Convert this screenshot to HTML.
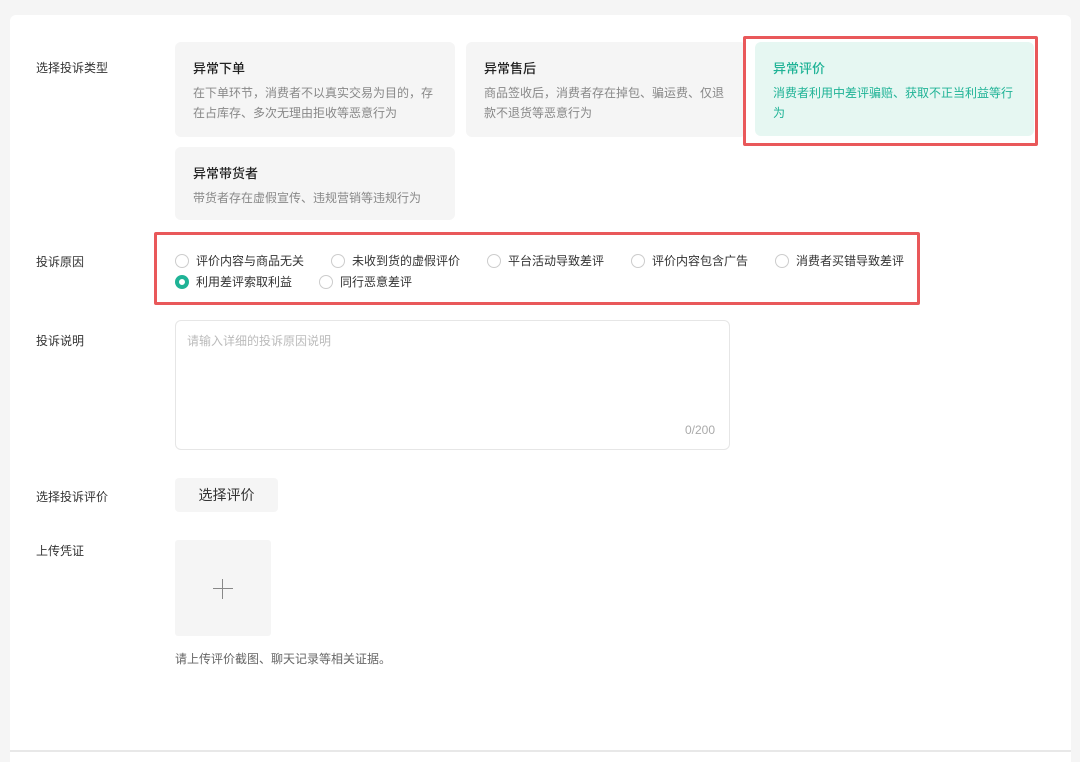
<!DOCTYPE html>
<html><head><meta charset="utf-8"><style>
*{margin:0;padding:0;box-sizing:border-box}
body{width:1080px;height:759px;background:#f5f5f5;font-family:"Liberation Sans","Noto Sans CJK SC",sans-serif;position:relative;overflow:hidden;color:#333}
.card{position:absolute;left:10px;top:15px;width:1061px;height:737px;background:#fff;border-radius:6px 6px 0 0;border-bottom:2px solid #e8e8e8}
.below{position:absolute;left:10px;top:752px;width:1061px;height:10px;background:#fff}
.a{position:absolute;white-space:nowrap}
.lbl{font-size:12px;color:#333}
.t{position:absolute;background:#f5f5f5;border-radius:6px;padding:18px 18px 0 18px}
.t b{display:block;font-size:13px;font-weight:500;color:#222;line-height:18px;margin-bottom:5px}
.t p{font-size:12px;color:#888;line-height:20px}
.red{position:absolute;border:3px solid #e9585a;border-radius:2px}
.r{position:absolute;font-size:12px;color:#333;line-height:16px;white-space:nowrap;padding-left:21px}
.r:before{content:"";position:absolute;left:0;top:1px;width:14px;height:14px;border:1px solid #ccc;border-radius:50%;box-sizing:border-box}
.r.on:before{border:4px solid #1fb396}
</style></head><body>
<div class="card"></div><div class="below"></div>
<div class="a lbl" style="left:36px;top:59px">选择投诉类型</div>
<div class="t" style="left:175px;top:42px;width:280px;height:95px"><b>异常下单</b><p>在下单环节，消费者不以真实交易为目的，存<br>在占库存、多次无理由拒收等恶意行为</p></div>
<div class="t" style="left:466px;top:42px;width:280px;height:95px"><b>异常售后</b><p>商品签收后，消费者存在掉包、骗运费、仅退<br>款不退货等恶意行为</p></div>
<div class="t" style="left:755px;top:42px;width:279px;height:94px;background:#e6f7f2"><b style="color:#1fb396;font-weight:500">异常评价</b><p style="color:#1fb396">消费者利用中差评骗赔、获取不正当利益等行<br>为</p></div>
<div class="red" style="left:743px;top:36px;width:295px;height:110px"></div>
<div class="t" style="left:175px;top:147px;width:280px;height:73px"><b>异常带货者</b><p>带货者存在虚假宣传、违规营销等违规行为</p></div>

<div class="a lbl" style="left:36px;top:253px">投诉原因</div>
<div class="red" style="left:154px;top:232px;width:766px;height:73px"></div>
<div class="r" style="left:175px;top:253px">评价内容与商品无关</div>
<div class="r" style="left:331px;top:253px">未收到货的虚假评价</div>
<div class="r" style="left:487px;top:253px">平台活动导致差评</div>
<div class="r" style="left:631px;top:253px">评价内容包含广告</div>
<div class="r" style="left:775px;top:253px">消费者买错导致差评</div>
<div class="r on" style="left:175px;top:274px">利用差评索取利益</div>
<div class="r" style="left:319px;top:274px">同行恶意差评</div>

<div class="a lbl" style="left:36px;top:332px">投诉说明</div>
<div class="a" style="left:175px;top:320px;width:555px;height:130px;border:1px solid #e6e6e6;border-radius:6px"></div>
<div class="a" style="left:187px;top:332px;font-size:12px;color:#bbb">请输入详细的投诉原因说明</div>
<div class="a" style="left:685px;top:423px;font-size:12px;color:#aaa">0/200</div>

<div class="a lbl" style="left:36px;top:488px">选择投诉评价</div>
<div class="a" style="left:175px;top:478px;width:103px;height:34px;background:#f5f5f5;border-radius:4px;font-size:14px;line-height:34px;text-align:center;color:#333">选择评价</div>

<div class="a lbl" style="left:36px;top:542px">上传凭证</div>
<div class="a" style="left:175px;top:540px;width:96px;height:96px;background:#f5f5f5;border-radius:3px"></div>
<div class="a" style="left:213px;top:588px;width:20px;height:1px;background:#888"></div>
<div class="a" style="left:222px;top:579px;width:1px;height:20px;background:#888"></div>
<div class="a" style="left:175px;top:650px;font-size:12px;color:#666">请上传评价截图、聊天记录等相关证据。</div>
</body></html>
